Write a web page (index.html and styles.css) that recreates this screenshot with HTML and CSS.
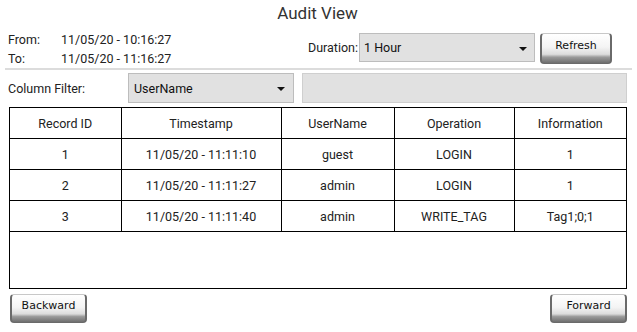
FILE: index.html
```html
<!DOCTYPE html>
<html lang="en">
<head>
  <meta charset="UTF-8">
  <meta name="viewport" content="width=device-width, initial-scale=1.0">
  <title>Audit View</title>
  <link rel="stylesheet" href="styles.css">
</head>
<body>
  <div class="screen">
    <h1 class="title">Audit View</h1>

    <div class="range-row">
      <div class="range">
        <div class="range-line"><span class="range-label">From:</span><span>11/05/20 - 10:16:27</span></div>
        <div class="range-line"><span class="range-label">To:</span><span>11/05/20 - 11:16:27</span></div>
      </div>
      <div class="duration">
        <span class="duration-label">Duration:</span>
        <div class="select duration-select">
          <span>1 Hour</span>
          <span class="caret"></span>
        </div>
        <button class="hmi-btn refresh-btn">Refresh</button>
      </div>
    </div>

    <div class="separator"></div>

    <div class="filter-row">
      <span class="filter-label">Column Filter:</span>
      <div class="select filter-select">
        <span>UserName</span>
        <span class="caret"></span>
      </div>
      <div class="filter-input"></div>
    </div>

    <div class="grid-frame">
      <table class="grid">
        <colgroup>
          <col style="width: 111px">
          <col style="width: 160px">
          <col style="width: 113px">
          <col style="width: 120px">
          <col>
        </colgroup>
        <thead>
          <tr>
            <th>Record ID</th>
            <th>Timestamp</th>
            <th>UserName</th>
            <th>Operation</th>
            <th>Information</th>
          </tr>
        </thead>
        <tbody>
          <tr>
            <td>1</td>
            <td>11/05/20 - 11:11:10</td>
            <td>guest</td>
            <td>LOGIN</td>
            <td>1</td>
          </tr>
          <tr>
            <td>2</td>
            <td>11/05/20 - 11:11:27</td>
            <td>admin</td>
            <td>LOGIN</td>
            <td>1</td>
          </tr>
          <tr>
            <td>3</td>
            <td>11/05/20 - 11:11:40</td>
            <td>admin</td>
            <td>WRITE_TAG</td>
            <td>Tag1;0;1</td>
          </tr>
        </tbody>
      </table>
    </div>

    <div class="nav-row">
      <button class="hmi-btn nav-btn">Backward</button>
      <button class="hmi-btn nav-btn">Forward</button>
    </div>
  </div>
</body>
</html>
```

FILE: styles.css
```css
body {
  margin: 0;
  padding: 0;
  background: #ffffff;
  font-family: Roboto, "Noto Sans", sans-serif;
  color: #222;
}
.screen {
  width: 637px;
  height: 332px;
  box-sizing: border-box;
  padding: 0 10px 0 8px;
}
.title {
  margin: 0;
  height: 28px;
  line-height: 26px;
  text-align: center;
  font-size: 17px;
  font-weight: 400;
  color: #333;
}
.range-row {
  display: flex;
  justify-content: space-between;
  height: 39px;
}
.range {
  font-size: 12.5px;
  padding-top: 2px;
}
.range-line {
  display: flex;
  height: 19px;
  line-height: 19px;
}
.range-label {
  width: 53px;
}
.duration {
  display: flex;
  align-items: flex-start;
  padding-top: 5px;
  margin-right: 15px;
}
.duration-label {
  font-size: 12.5px;
  line-height: 29px;
  margin-right: 1px;
}
.select {
  display: flex;
  align-items: center;
  justify-content: space-between;
  box-sizing: border-box;
  background: #e1e1e1;
  border: 1px solid #bdbdbd;
  font-size: 12.5px;
  color: #111;
}
.caret {
  width: 0;
  height: 0;
  border-left: 4px solid transparent;
  border-right: 4px solid transparent;
  border-top: 4px solid #111;
  margin-top: 2px;
}
.duration-select {
  width: 176px;
  height: 29px;
  padding: 0 7px 0 4px;
}
.hmi-btn {
  box-sizing: border-box;
  font-family: "DejaVu Sans", sans-serif;
  font-size: 11px;
  color: #111;
  padding: 0 0 6px 0;
  border: 1px solid #6a6a6a;
  border-top-color: #c8c8c8;
  border-left-width: 2px;
  border-right-width: 2px;
  border-radius: 4px;
  background: linear-gradient(#ffffff 0%, #f4f4f4 45%, #dcdcdc 70%, #9a9a9a 80%, #6e6e6e 100%);
}
.refresh-btn {
  width: 72px;
  height: 31px;
  margin-left: 5px;
}
.separator {
  height: 2px;
  background: #dcdcdc;
  margin: 1px -5px 3px -3px;
}
.filter-row {
  display: flex;
  align-items: center;
  height: 30px;
}
.filter-label {
  width: 120px;
  font-size: 12.5px;
}
.filter-select {
  width: 166px;
  height: 30px;
  padding: 0 8px 0 5px;
}
.filter-input {
  flex: 1;
  height: 30px;
  margin-left: 8px;
  box-sizing: border-box;
  background: #e1e1e1;
  border: 1px solid #cfcfcf;
}
.grid-frame {
  margin-top: 4px;
  margin-left: 1px;
  height: 182px;
  box-sizing: border-box;
  border: 1px solid #000;
}
.grid {
  width: 100%;
  table-layout: fixed;
  border-collapse: collapse;
  font-size: 12.5px;
}
.grid th,
.grid td {
  height: 30px;
  padding: 0;
  text-align: center;
  font-weight: 400;
  border-right: 1px solid #000;
  border-bottom: 1px solid #000;
}
.grid th:last-child,
.grid td:last-child {
  border-right: none;
}
.nav-row {
  display: flex;
  justify-content: space-between;
  margin-top: 5px;
  padding-left: 2px;
}
.nav-btn {
  width: 77px;
  height: 29px;
}
```
